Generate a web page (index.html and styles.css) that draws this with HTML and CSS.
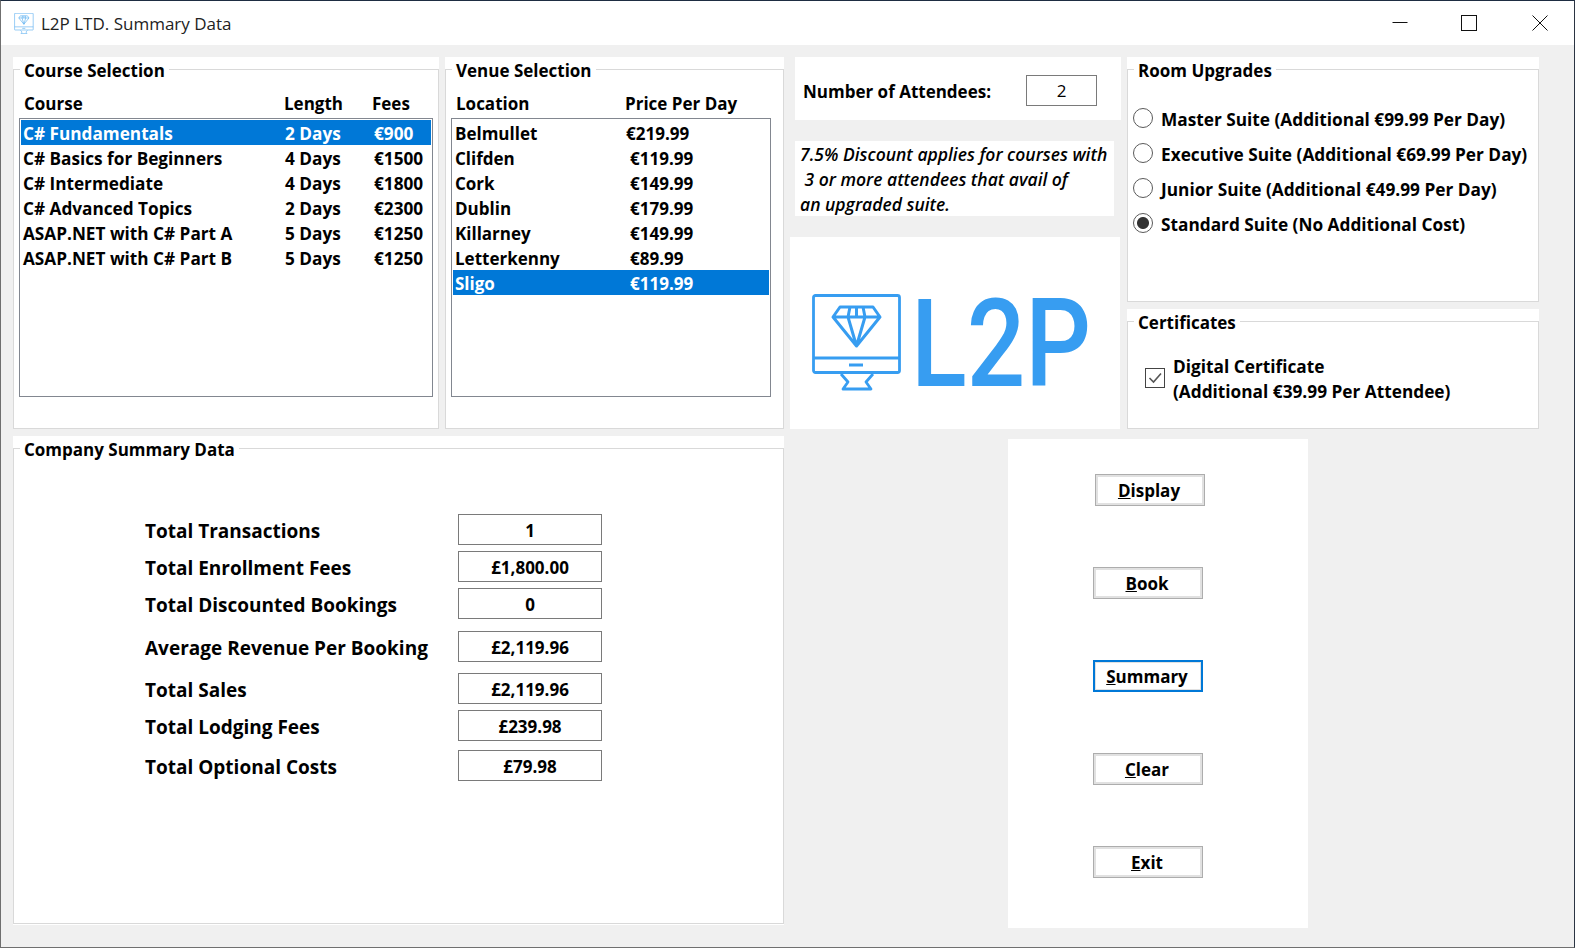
FILE: index.html
```html
<!DOCTYPE html>
<html>
<head lang="en">
    <meta charset="UTF-8">
    <title>L2P LTD. Summary Data</title>
    <link rel="stylesheet" href="styles.css">
</head>
<body>
<svg class="defs" width="0" height="0">
    <symbol id="monitor" viewBox="0 0 90 97">
        <g fill="none" stroke="currentColor" stroke-width="2.8" stroke-linejoin="round">
            <rect x="1.5" y="1.5" width="86" height="77" rx="2"/>
            <path d="M1.5 64H87.5"/>
            <path d="M37 71H51" stroke-width="3"/>
            <path d="M29 80 36 88 31 95H59L54 88 61 80"/>
            <path d="M28 13H61L68 23 44.5 52 21 23ZM21 23H68M36 23 44.5 52 53 23M38 13 36 23M51 13 53 23M44.5 13V23" stroke-width="3"/>
        </g>
    </symbol>
</svg>
<div class="window">
    <div class="titlebar">
        <svg class="title-icon"><use href="#monitor"/></svg>
        <span class="title-text">L2P LTD. Summary Data</span>
        <div class="controls">
            <svg class="ctrl" viewBox="0 0 16 16"><path d="M0.5 7.5H15.5"/></svg>
            <svg class="ctrl ctrl-max" viewBox="0 0 16 16"><rect x="0.5" y="0.5" width="15" height="15"/></svg>
            <svg class="ctrl" viewBox="0 0 16 16"><path d="M0.5 0.5 15.5 15.5M15.5 0.5 0.5 15.5"/></svg>
        </div>
    </div>

    <div class="top">
        <div class="group">
            <fieldset>
                <legend>Course Selection</legend>
                <div class="head course-head"><span>Course</span><span>Length</span><span>Fees</span></div>
                <ul class="listbox course-list">
                    <li class="selected"><span>C# Fundamentals</span><span>2 Days</span><span>€900</span></li>
                    <li><span>C# Basics for Beginners</span><span>4 Days</span><span>€1500</span></li>
                    <li><span>C# Intermediate</span><span>4 Days</span><span>€1800</span></li>
                    <li><span>C# Advanced Topics</span><span>2 Days</span><span>€2300</span></li>
                    <li><span>ASAP.NET with C# Part A</span><span>5 Days</span><span>€1250</span></li>
                    <li><span>ASAP.NET with C# Part B</span><span>5 Days</span><span>€1250</span></li>
                </ul>
            </fieldset>
        </div>

        <div class="group">
            <fieldset>
                <legend>Venue Selection</legend>
                <div class="head venue-head"><span>Location</span><span>Price Per Day</span></div>
                <ul class="listbox venue-list">
                    <li><span>Belmullet</span><span class="pull">€219.99</span></li>
                    <li><span>Clifden</span><span>€119.99</span></li>
                    <li><span>Cork</span><span>€149.99</span></li>
                    <li><span>Dublin</span><span>€179.99</span></li>
                    <li><span>Killarney</span><span>€149.99</span></li>
                    <li><span>Letterkenny</span><span>€89.99</span></li>
                    <li class="selected"><span>Sligo</span><span>€119.99</span></li>
                </ul>
            </fieldset>
        </div>

        <div class="middle">
            <div class="attendees">
                <label>Number of Attendees:</label>
                <div class="num-box">2</div>
            </div>
            <div class="discount">7.5% Discount applies for courses with<br>&nbsp;3 or more attendees that avail of<br>an upgraded suite.</div>
            <div class="logo">
                <svg class="logo-icon"><use href="#monitor"/></svg>
                <span class="logo-text">L2P</span>
            </div>
        </div>

        <div class="right">
            <div class="group room">
                <fieldset>
                    <legend>Room Upgrades</legend>
                    <div class="radios">
                        <label><input type="radio" name="room"><span>Master Suite (Additional €99.99 Per Day)</span></label>
                        <label><input type="radio" name="room"><span>Executive Suite (Additional €69.99 Per Day)</span></label>
                        <label><input type="radio" name="room"><span>Junior Suite (Additional €49.99 Per Day)</span></label>
                        <label><input type="radio" name="room" checked><span>Standard Suite (No Additional Cost)</span></label>
                    </div>
                </fieldset>
            </div>
            <div class="group cert">
                <fieldset>
                    <legend>Certificates</legend>
                    <div class="cert-row">
                        <span class="checkbox"><svg viewBox="0 0 18 18"><path d="M3.5 9 7.5 13 15 4.5"/></svg></span>
                        <span>Digital Certificate<br>(Additional €39.99 Per Attendee)</span>
                    </div>
                </fieldset>
            </div>
        </div>
    </div>

    <div class="bottom">
        <div class="group company">
            <fieldset>
                <legend>Company Summary Data</legend>
                <div class="totals">
                    <div class="total"><span>Total Transactions</span><b>1</b></div>
                    <div class="total"><span>Total Enrollment Fees</span><b>£1,800.00</b></div>
                    <div class="total"><span>Total Discounted Bookings</span><b>0</b></div>
                    <div class="total gap-12"><span>Average Revenue Per Booking</span><b>£2,119.96</b></div>
                    <div class="total gap-11"><span>Total Sales</span><b>£2,119.96</b></div>
                    <div class="total"><span>Total Lodging Fees</span><b>£239.98</b></div>
                    <div class="total gap-9"><span>Total Optional Costs</span><b>£79.98</b></div>
                </div>
            </fieldset>
        </div>
        <div class="actions">
            <button class="btn first"><u>D</u>isplay</button>
            <button class="btn"><u>B</u>ook</button>
            <button class="btn focus"><u>S</u>ummary</button>
            <button class="btn"><u>C</u>lear</button>
            <button class="btn"><u>E</u>xit</button>
        </div>
    </div>
</div>
</body>
</html>
```

FILE: styles.css
```css
* {
    margin: 0;
    padding: 0;
    box-sizing: border-box;
}
ul {
    list-style: none;
}
body {
    font-family: "Open Sans", "Liberation Sans", sans-serif;
    font-size: 17px;
    font-weight: 700;
    color: #000;
    background: #f0f0f0;
}
.defs {
    position: absolute;
}
.window {
    width: 1575px;
    height: 948px;
    background: #f0f0f0;
    border: 1px solid #6f6f6f;
    border-top-color: #1e2d42;
    border-right-color: #2b3442;
    overflow: hidden;
}

/* title bar */
.titlebar {
    height: 44px;
    background: #fff;
    display: flex;
    align-items: center;
    padding-left: 13px;
}
.title-icon {
    width: 20px;
    height: 21px;
    color: #5aaef0;
}
.title-text {
    margin-left: 7px;
    font-weight: 400;
    color: #222;
}
.controls {
    margin-left: auto;
    display: flex;
    gap: 54px;
    padding-right: 26px;
}
.ctrl {
    width: 16px;
    height: 16px;
    fill: none;
    stroke: #111;
    stroke-width: 1;
}
.ctrl-max {
    margin: 0 1px 0 -1px;
}

/* groups */
.top {
    display: grid;
    grid-template-columns: 426px 339px 331px 412px;
    column-gap: 6px;
    height: 372px;
    margin: 12px 0 0 12px;
}
.group {
    background: #fff;
}
fieldset {
    height: 100%;
    min-width: 0;
    border: 1px solid #d9d9d9;
    padding: 0 5px;
}
legend {
    position: relative;
    top: 2px;
    margin-left: 1px;
    padding: 0 4px;
    line-height: 24px;
}

/* list boxes */
.head {
    display: grid;
    margin-top: 11px;
    padding-left: 5px;
    line-height: 24px;
    height: 26px;
}
.course-head {
    grid-template-columns: 260px 88px auto;
}
.venue-head {
    grid-template-columns: 169px auto;
}
.listbox {
    height: 279px;
    background: #fff;
    border: 1px solid #828790;
    padding: 1px;
}
.listbox li {
    display: grid;
    height: 25px;
    padding-top: 1px;
    line-height: 25px;
}
.course-list {
    width: 414px;
}
.course-list li {
    grid-template-columns: 262px 89px auto;
    padding-left: 2px;
    font-size: 17.2px;
}
.venue-list {
    width: 320px;
}
.venue-list li {
    grid-template-columns: 175px auto;
    padding-left: 2px;
}
.pull {
    margin-left: -4px;
}
.listbox li.selected {
    background: #0078d7;
    color: #fff;
}

/* middle column */
.attendees {
    display: flex;
    align-items: center;
    width: 326px;
    height: 63px;
    margin-left: 5px;
    padding: 4px 0 0 8px;
    background: #fff;
}
.attendees label {
    margin-top: 2px;
}
.num-box {
    width: 71px;
    height: 31px;
    margin-left: auto;
    margin-right: 24px;
    border: 1px solid #7a7a7a;
    text-align: center;
    line-height: 29px;
    font-weight: 400;
}
.discount {
    width: 319px;
    height: 75px;
    margin: 21px 0 21px 5px;
    padding: 1px 0 0 5px;
    background: #fff;
    font-size: 17.5px;
    font-style: italic;
    font-weight: 600;
    line-height: 25px;
}
.logo {
    display: flex;
    align-items: center;
    width: 330px;
    height: 192px;
    padding: 18px 0 0 22px;
    background: #fff;
    color: #379df1;
    overflow: hidden;
}
.logo-icon {
    flex: none;
    width: 90px;
    height: 97px;
}
.logo-text {
    flex: none;
    margin: 6px 0 0 9px;
    font-family: Roboto, sans-serif;
    font-size: 122px;
    line-height: 1;
    font-weight: 500;
    transform: scaleX(.845);
    transform-origin: left center;
}

/* right column */
.room {
    height: 245px;
}
.radios {
    margin-top: 27px;
    display: flex;
    flex-direction: column;
    gap: 15px;
    font-size: 17.25px;
}
.radios label {
    display: flex;
    align-items: center;
    height: 20px;
    gap: 8px;
}
.radios label span {
    padding-top: 2px;
}
.radios input {
    appearance: none;
    width: 20px;
    height: 20px;
    border: 1px solid #5a5a5a;
    border-radius: 50%;
    background: #fff;
}
.radios input:checked {
    background: radial-gradient(circle, #333 0, #333 5.5px, #fff 6.5px);
}
.cert {
    height: 120px;
    margin-top: 7px;
}
.cert-row {
    display: flex;
    margin: 21px 0 0 12px;
    font-size: 17.25px;
    line-height: 25px;
    gap: 8px;
}
.checkbox {
    flex: none;
    width: 20px;
    height: 20px;
    margin-top: 14px;
    border: 1px solid #444;
}
.checkbox svg {
    display: block;
    fill: none;
    stroke: #555;
    stroke-width: 1.6;
}

/* bottom */
.bottom {
    display: flex;
    align-items: flex-start;
    margin: 7px 0 0 12px;
}
.company {
    width: 771px;
    height: 489px;
    padding-bottom: 1px;
}
.totals {
    margin: 54px 0 0 126px;
}
.total {
    display: grid;
    grid-template-columns: 313px 144px;
    grid-template-rows: 31px;
    height: 31px;
    margin-top: 6px;
}
.total span {
    padding-top: 3px;
    font-size: 19px;
    line-height: 29px;
}
.total b {
    font-weight: 700;
    text-align: center;
    padding-top: 1px;
    line-height: 29px;
    border: 1px solid #7a7a7a;
}
.gap-12 {
    margin-top: 12px;
}
.gap-11 {
    margin-top: 11px;
}
.gap-9 {
    margin-top: 9px;
}
.actions {
    display: flex;
    flex-direction: column;
    align-items: flex-start;
    gap: 61px;
    width: 300px;
    height: 489px;
    margin: 3px 0 0 224px;
    padding: 35px 0 0 85px;
    background: #fff;
}
.btn {
    width: 110px;
    height: 32px;
    padding-right: 2px;
    font: inherit;
    background: #fff;
    border: 1px solid #adadad;
    box-shadow: inset 0 0 0 2px #e1e1e1;
}
.first {
    margin-left: 2px;
}
.focus {
    border: 2px solid #0078d7;
    box-shadow: inset 0 0 0 1px #e1e1e1;
}
```
